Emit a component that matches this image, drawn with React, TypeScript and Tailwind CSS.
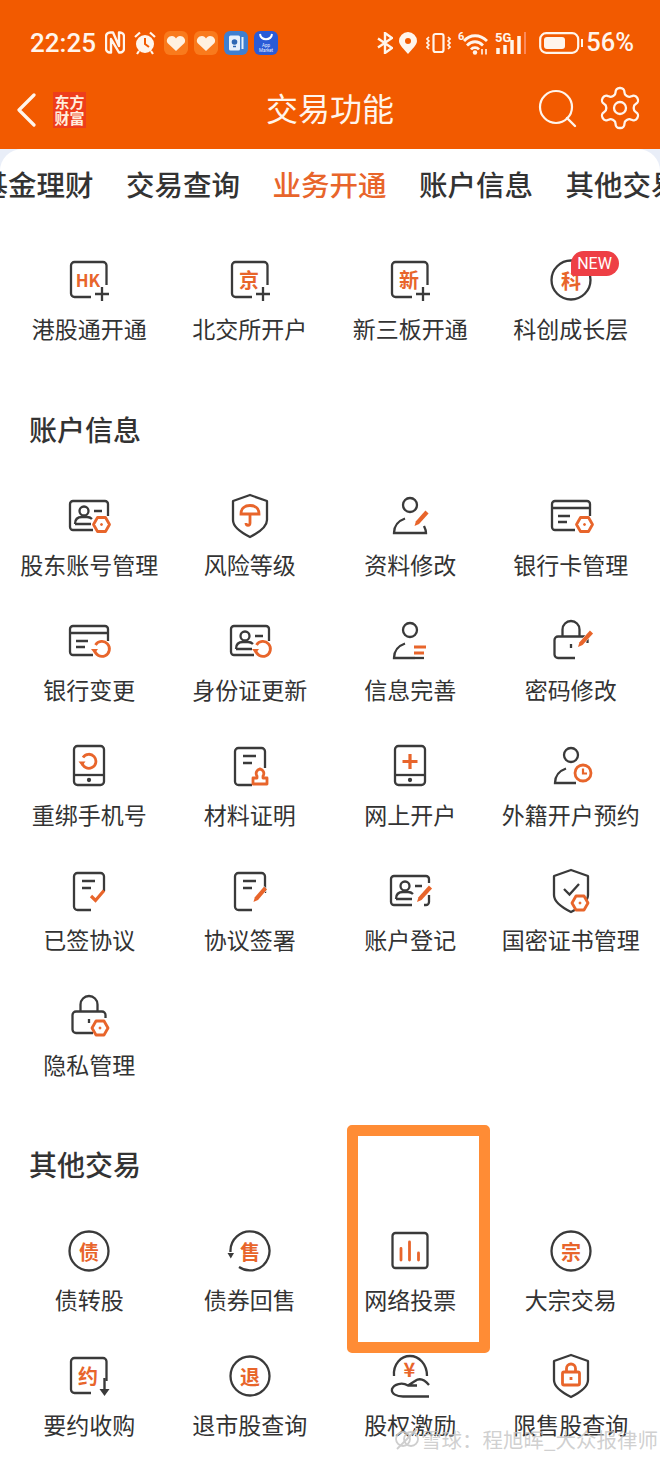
import React from 'react';

const DARK = '#3a3a3a';
const ORANGE = '#e8652b';
const CREAM = '#fff5ec';
const SW = '2.3';

// shared bits for the 48x48 function icons
const Hex = ({ x, y }: { x: number; y: number }) => (
  <g stroke={ORANGE} strokeWidth="2.8" fill="#fff" strokeLinejoin="round">
    <path d={`M${x - 4} ${y - 7}H${x + 4}L${x + 8} ${y}L${x + 4} ${y + 7}H${x - 4}L${x - 8} ${y}Z`} />
    <circle cx={x} cy={y} r="1" fill={ORANGE} strokeWidth="1" />
  </g>
);

const Refresh = ({ x, y, r = 7.5 }: { x: number; y: number; r?: number }) => (
  <g fill="none">
    <circle cx={x} cy={y} r={r + 1.5} fill="#fff" stroke="none" />
    <path d={`M${x - r + 1} ${y - 4}A${r} ${r} 0 1 1 ${x - r} ${y + 1}`} stroke={ORANGE} strokeWidth="2.8" />
    <path d={`M${x - r - 3.5} ${y}H${x - r + 3.5}L${x - r} ${y + 4.5}Z`} fill={ORANGE} />
  </g>
);

// pencil: thick shaft that narrows to a point at (x2, y2)
const Pen = ({ x1, y1, x2, y2 }: { x1: number; y1: number; x2: number; y2: number }) => {
  const len = Math.hypot(x2 - x1, y2 - y1);
  const ux = (x2 - x1) / len;
  const uy = (y2 - y1) / len;
  const nx = -uy * 2.1;
  const ny = ux * 2.1;
  const bx = x2 - ux * 4.5;
  const by = y2 - uy * 4.5;
  const d = `M${x1 + nx} ${y1 + ny}L${bx + nx} ${by + ny}L${x2} ${y2}L${bx - nx} ${by - ny}L${x1 - nx} ${y1 - ny}Z`;
  return <path d={d} fill={ORANGE} stroke="#fff" strokeWidth="1" paintOrder="stroke" />;
};

const Person = ({ short = false }: { short?: boolean }) => (
  <g fill="none" stroke={DARK} strokeWidth={SW}>
    <circle cx="24" cy="13" r="7" />
    <path d={short ? 'M29 41H8C8 34 12 29 19 26.500' : 'M38 34C39 36 40 38 40 41H8C8 34 12 29 19 26.500'} />
  </g>
);

const IdCard = () => (
  <g fill="none" stroke={DARK} strokeWidth={SW}>
    <path d="M28 38H8A3 3 0 0 1 5 35V12A3 3 0 0 1 8 9H40A3 3 0 0 1 43 12V24" />
    <circle cx="19" cy="19" r="4.500" />
    <path d="M10 32C10 27 13 25 17 25H22C24 25 26 26 27 27M10 32H26M29 19H37" />
  </g>
);

const BankCard = () => (
  <g fill="none" stroke={DARK} strokeWidth={SW}>
    <path d="M28 38H8A3 3 0 0 1 5 35V12A3 3 0 0 1 8 9H40A3 3 0 0 1 43 12V24M5 16H43M11 24H23M11 30H20" />
  </g>
);

const Shield = () => (
  <path d="M24 3L41 9V28C41 36 30 42 24 45C18 42 7 36 7 28V9Z" fill="none" stroke={DARK} strokeWidth={SW} strokeLinejoin="round" />
);

const Phone = () => (
  <g fill="none" stroke={DARK} strokeWidth={SW}>
    <rect x="9" y="4" width="30" height="39" rx="3.500" />
    <path d="M9 33H39" />
    <circle cx="24" cy="38" r="1" fill={DARK} />
  </g>
);

const Doc = () => (
  <g fill="none" stroke={DARK} strokeWidth={SW}>
    <path d="M26 43H12.500A3.500 3.500 0 0 1 9 39.500V9.500A3.500 3.500 0 0 1 12.500 6H35.500A3.500 3.500 0 0 1 39 9.500V26M17 14H30M17 21H26" />
  </g>
);

const Padlock = () => (
  <g fill="none" stroke={DARK} strokeWidth={SW}>
    <path d="M28 41H11A3.500 3.500 0 0 1 7.500 37.500V23A3.500 3.500 0 0 1 11 19.500H37A3.500 3.500 0 0 1 40.500 23V26M15.500 19.500V12.500A8.500 8.500 0 0 1 32.500 12.500V19.500M24 27V31" />
  </g>
);

const OpenSquare = () => (
  <path d="M26 41H9.500A3.500 3.500 0 0 1 6 37.500V9.500A3.500 3.500 0 0 1 9.500 6H38A3.500 3.500 0 0 1 41.500 9.500V29" fill="none" stroke={DARK} strokeWidth={SW} />
);

const Glyph = ({ t, x = 24, y = 24, size = 20 }: { t: string; x?: number; y?: number; size?: number }) => (
  <text x={x} y={y} fill={ORANGE} fontSize={size} fontWeight="700" textAnchor="middle" dominantBaseline="central" fontFamily="'Noto Sans CJK SC', sans-serif">
    {t}
  </text>
);

const Plus = () => <path d="M37 31V45M30 38H44" stroke={DARK} strokeWidth={SW} fill="none" />;
const Ring = () => <circle cx="24" cy="24" r="19.500" fill="none" stroke={DARK} strokeWidth={SW} />;

const icons: Record<string, React.ReactNode> = {
  hk: (<><OpenSquare /><Plus /><Glyph t="HK" x={23} y={23} size={17} /></>),
  jing: (<><OpenSquare /><Plus /><Glyph t="京" x={23} y={23} /></>),
  xin: (<><OpenSquare /><Plus /><Glyph t="新" x={23} y={23} /></>),
  ke: (<><Ring /><Glyph t="科" /></>),
  idHex: (<><IdCard /><Hex x={36.500} y={32.500} /></>),
  umbrella: (
    <>
      <Shield />
      <path d="M15 22C15 16 19 13.500 24 13.500C29 13.500 33 16 33 22ZM24 22V31C24 34 20 34 20 31" fill="none" stroke={ORANGE} strokeWidth="2.800" />
    </>
  ),
  personPen: (<><Person /><Pen x1={41} y1={20} x2={28.500} y2={34} /></>),
  cardHex: (<><BankCard /><Hex x={37.500} y={32.500} /></>),
  cardRefresh: (<><BankCard /><Refresh x={37} y={32} /></>),
  idRefresh: (<><IdCard /><Refresh x={37} y={32} /></>),
  personLines: (
    <>
      <Person short />
      <path d="M28 30H40M28 36H38" stroke={ORANGE} strokeWidth="2.800" fill="none" />
      <path d="M38 41H29" stroke={DARK} strokeWidth={SW} fill="none" />
    </>
  ),
  lockPen: (<><Padlock /><Pen x1={44.500} y1={15} x2={31} y2={30} /></>),
  phoneRefresh: (<><Phone /><Refresh x={24} y={19.500} r={7} /></>),
  docStamp: (
    <>
      <Doc />
      <g fill="#fff" stroke={ORANGE} strokeWidth="2.800">
        <path d="M34 27A4.500 4.500 0 0 1 37 34V36H41V42H27V36H31V34A4.500 4.500 0 0 1 34 27Z" strokeLinejoin="round" />
      </g>
    </>
  ),
  phonePlus: (<><Phone /><path d="M24 12V27M16.500 19.500H31.500" stroke={ORANGE} strokeWidth="3.200" fill="none" /></>),
  personClock: (
    <>
      <Person short />
      <circle cx="36" cy="31" r="8" fill="#fff" stroke={ORANGE} strokeWidth="2.800" />
      <path d="M36 26.500V31.500H40" stroke={ORANGE} strokeWidth="2.200" fill="none" />
    </>
  ),
  docCheck: (<><Doc /><rect x="24" y="24" width="17" height="12" fill="#fff" /><path d="M26 29L30.500 33.500L39 23.500" stroke={ORANGE} strokeWidth="3.200" fill="none" /></>),
  docPen: (<><Doc /><Pen x1={39.500} y1={21} x2={27.500} y2={35} /></>),
  idPen: (
    <>
      <g fill="none" stroke={DARK} strokeWidth={SW}>
        <path d="M26 38H8A3 3 0 0 1 5 35V12A3 3 0 0 1 8 9H40A3 3 0 0 1 43 12V16M43 28V35A3 3 0 0 1 40 38H38" />
        <circle cx="19" cy="19" r="4.500" />
        <path d="M10 32C10 27 13 25 17 25H22C24 25 26 26 27 27M10 32H26M29 19H36" />
      </g>
      <Pen x1={44.500} y1={20} x2={31} y2={35} />
    </>
  ),
  shieldHex: (
    <>
      <Shield />
      <path d="M17 22L22.500 27.500L32 17" stroke={DARK} strokeWidth={SW} fill="none" />
      <Hex x={33} y={36} />
    </>
  ),
  lockHex: (<><Padlock /><Hex x={35} y={36} /></>),
  zhai: (<><Ring /><Glyph t="债" /></>),
  shou: (
    <>
      <path d="M13 40A19.500 19.500 0 1 0 4.500 25" fill="none" stroke={DARK} strokeWidth={SW} />
      <path d="M1.500 26H8L4.800 31.500Z" fill={DARK} />
      <Glyph t="售" />
    </>
  ),
  chart: (
    <>
      <rect x="6.500" y="6" width="35" height="35" rx="3" fill="none" stroke={DARK} strokeWidth={SW} />
      <path d="M15 21.500V33M23.500 15V33M32.500 26V33" stroke={ORANGE} strokeWidth="2.800" strokeLinecap="round" fill="none" />
    </>
  ),
  zong: (<><Ring /><Glyph t="宗" /></>),
  yue: (
    <>
      <OpenSquare />
      <path d="M39.500 26V38" stroke={DARK} strokeWidth="2.400" fill="none" />
      <path d="M34.500 37H44.500L39.500 44Z" fill={DARK} />
      <Glyph t="约" x={23} y={23} />
    </>
  ),
  tui: (<><Ring /><Glyph t="退" /></>),
  equity: (
    <>
      <path d="M8 24C7 12 15 4 24 4C33 4 41 12 41 24" fill="none" stroke={DARK} strokeWidth={SW} />
      <Glyph t="¥" x={23.500} y={16} size={20} />
      <path d="M43 33C38 27 33 26 29 29L22 33.500H31M22 33.500C16 30 8 32 6 37C5 42 11 44.500 17 44.500H43" fill="none" stroke={DARK} strokeWidth={SW} strokeLinejoin="round" />
    </>
  ),
  shieldLock: (
    <>
      <Shield />
      <rect x="15.500" y="20" width="17" height="13" rx="1.500" fill="none" stroke={ORANGE} strokeWidth="2.800" />
      <path d="M19.500 20V16.500A4.500 4.500 0 0 1 28.500 16.500V20" fill="none" stroke={ORANGE} strokeWidth="2.800" />
      <path d="M24 25V28" stroke={ORANGE} strokeWidth="2.800" />
    </>
  ),
};

type Item = { icon: string; label: string };

const openItems: Item[] = [
  { icon: 'hk', label: '港股通开通' },
  { icon: 'jing', label: '北交所开户' },
  { icon: 'xin', label: '新三板开通' },
  { icon: 'ke', label: '科创成长层' },
];

const accountItems: Item[] = [
  { icon: 'idHex', label: '股东账号管理' },
  { icon: 'umbrella', label: '风险等级' },
  { icon: 'personPen', label: '资料修改' },
  { icon: 'cardHex', label: '银行卡管理' },
  { icon: 'cardRefresh', label: '银行变更' },
  { icon: 'idRefresh', label: '身份证更新' },
  { icon: 'personLines', label: '信息完善' },
  { icon: 'lockPen', label: '密码修改' },
  { icon: 'phoneRefresh', label: '重绑手机号' },
  { icon: 'docStamp', label: '材料证明' },
  { icon: 'phonePlus', label: '网上开户' },
  { icon: 'personClock', label: '外籍开户预约' },
  { icon: 'docCheck', label: '已签协议' },
  { icon: 'docPen', label: '协议签署' },
  { icon: 'idPen', label: '账户登记' },
  { icon: 'shieldHex', label: '国密证书管理' },
  { icon: 'lockHex', label: '隐私管理' },
];

const otherItems: Item[] = [
  { icon: 'zhai', label: '债转股' },
  { icon: 'shou', label: '债券回售' },
  { icon: 'chart', label: '网络投票' },
  { icon: 'zong', label: '大宗交易' },
  { icon: 'yue', label: '要约收购' },
  { icon: 'tui', label: '退市股查询' },
  { icon: 'equity', label: '股权激励' },
  { icon: 'shieldLock', label: '限售股查询' },
];

const tabs = ['基金理财', '交易查询', '业务开通', '账户信息', '其他交易'];

function FuncItem({ item }: { item: Item }) {
  return (
    <div className="relative flex flex-col items-center">
      <svg width="48" height="48" viewBox="0 0 48 48">
        {icons[item.icon]}
      </svg>
      <span className="mt-[8px] whitespace-nowrap text-[23px] leading-[32px] text-[#333]">{item.label}</span>
      {item.icon === 'ke' && (
        <span className="absolute left-[80px] top-[-5px] flex h-[25px] w-[48px] items-center justify-center rounded-[13px] rounded-bl-[4px] bg-[#ee3f45] font-['Roboto'] text-[16px] text-white">
          NEW
        </span>
      )}
    </div>
  );
}

const Heart = () => (
  <svg className="ml-[6px]" width="24" height="24" viewBox="0 0 24 24">
    <rect width="24" height="24" rx="6" fill="#f97a1c" />
    <path d="M12 20L3.500 12C1.500 8.500 4.500 5 8 5C10 5 11 6 12 7.500C13 6 14 5 16 5C19.500 5 22.500 8.500 20.500 12Z" fill="#fff1e0" />
  </svg>
);

function StatusBar() {
  return (
    <div className="flex h-[85px] items-center pl-[30px] pr-[26px]">
      <span className="font-['Roboto'] text-[26px] font-medium leading-none text-[#fff5ec]">22:25</span>

      <svg className="ml-[9px]" width="20" height="23" viewBox="0 0 20 23">
        <path d="M8 1.500H5A4 4 0 0 0 1 5.500V17.500A4 4 0 0 0 5 21.500H6V8L14 21.500H15A4 4 0 0 0 19 17.500V5.500A4 4 0 0 0 15 1.500H14V15L8 1.500Z" fill="none" stroke={CREAM} strokeWidth="2.400" strokeLinejoin="round" />
      </svg>
      <svg className="ml-[9px]" width="22" height="24" viewBox="0 0 22 24">
        <circle cx="11" cy="13" r="9" fill={CREAM} />
        <path d="M11 7V13L15 16" stroke="#f25a00" strokeWidth="2" fill="none" />
        <path d="M1 6L6 1.500M21 6L16 1.500M5 20L3 23M17 20L19 23" stroke={CREAM} strokeWidth="2.200" />
      </svg>

      <div className="ml-[2px]" />
      <Heart />
      <Heart />
      <svg className="ml-[6px]" width="24" height="24" viewBox="0 0 24 24">
        <rect width="24" height="24" rx="6" fill="#3f7fd0" />
        <rect x="5" y="4.500" width="11" height="15" rx="1.500" fill="#e8f1fb" />
        <circle cx="10.500" cy="11" r="2.800" fill="#2f68b4" />
        <path d="M9 15.500H12" stroke="#2f68b4" strokeWidth="1.500" />
        <path d="M18.500 6V18" stroke="#e8f1fb" strokeWidth="2" />
      </svg>
      <svg className="ml-[6px]" width="24" height="24" viewBox="0 0 24 24">
        <rect width="24" height="24" rx="6" fill="#2a5bd7" />
        <path d="M6 3C7 10 17 10 18 3" stroke="#fff" strokeWidth="2" fill="none" />
        <text x="12" y="15.500" fontSize="4.500" textAnchor="middle" fill="#e6eeff" fontFamily="Roboto">App</text>
        <text x="12" y="20.500" fontSize="4.500" textAnchor="middle" fill="#e6eeff" fontFamily="Roboto">Market</text>
      </svg>

      <div className="flex-1" />

      <svg width="16" height="22" viewBox="0 0 16 22">
        <path d="M1 6.500L15 16L8 21V1L15 6L1 15.500" stroke={CREAM} strokeWidth="2.400" fill="none" />
      </svg>
      <svg className="ml-[6px]" width="18" height="22" viewBox="0 0 18 22">
        <path fillRule="evenodd" d="M9 22C5 17 0 13 0 9A9 9 0 0 1 18 9C18 13 13 17 9 22ZM9 12A3 3 0 1 0 9 6A3 3 0 0 0 9 12Z" fill={CREAM} />
      </svg>
      <svg className="ml-[9px]" width="25" height="22" viewBox="0 0 25 22">
        <rect x="7.500" y="2" width="10" height="18" rx="2" fill="none" stroke={CREAM} strokeWidth="2.200" />
        <path d="M3 5L1 7L3 9L1 11L3 13L1 15L3 17M22 5L24 7L22 9L24 11L22 13L24 15L22 17" stroke={CREAM} strokeWidth="1.600" fill="none" />
      </svg>
      <svg className="ml-[7px]" width="31" height="24" viewBox="0 0 31 24">
        <text x="0" y="9" fontSize="11" fontWeight="700" fill={CREAM} fontFamily="Roboto">6</text>
        <path d="M6 10C12 3 22 3 29 10M9 14.500C14 9.500 20 9.500 25 14.500M13 18.500C15 16 19 16 21 18.500" stroke={CREAM} strokeWidth="2.800" fill="none" />
        <circle cx="17" cy="21.500" r="2.200" fill={CREAM} />
        <path d="M24 23.500V18M28 18V23.500" stroke={CREAM} strokeWidth="1.600" />
      </svg>
      <svg className="ml-[6px]" width="31" height="24" viewBox="0 0 31 24">
        <text x="0" y="11" fontSize="13" fontWeight="700" fill={CREAM} fontFamily="Roboto">5G</text>
        <path d="M3 17V23M10 14V23M17 9V23M24 5V23" stroke={CREAM} strokeWidth="3.500" />
        <path d="M30 1V23" stroke="#fb8a5c" strokeWidth="2" />
      </svg>
      <svg className="ml-[13px]" width="44" height="24" viewBox="0 0 44 24">
        <rect x="1.200" y="2.200" width="38" height="19.600" rx="6" fill="none" stroke={CREAM} strokeWidth="2.200" />
        <rect x="5" y="6" width="21" height="12" rx="3" fill={CREAM} />
        <path d="M43 8V16" stroke={CREAM} strokeWidth="2" />
      </svg>
      <span className="ml-[3px] font-['Roboto'] text-[25.500px] font-medium leading-none text-[#fff5ec]">56%</span>
    </div>
  );
}

function NavBar() {
  return (
    <div className="relative flex h-[64px] justify-center pt-[2px]">
      <div className="absolute left-[16px] top-[7px] flex items-center">
        <svg width="22" height="34" viewBox="0 0 22 34">
          <path d="M18 2L3 17L18 32" stroke={CREAM} strokeWidth="3.200" strokeLinecap="round" strokeLinejoin="round" fill="none" />
        </svg>
        <div className="ml-[15px] flex h-[36px] w-[33px] items-center justify-center bg-[#ee3d1c] text-center text-[15px] font-bold leading-[16px] text-[#ffeedd]">
          东方
          <br />
          财富
        </div>
      </div>
      <span className="text-[32px] leading-[40px] text-[#fff5ec]">交易功能</span>
      <div className="absolute right-[16px] top-[-1px] flex items-center gap-[18px]">
        <svg className="mt-[2px]" width="40" height="40" viewBox="0 0 40 40">
          <circle cx="18" cy="18" r="16" fill="none" stroke={CREAM} strokeWidth="2.200" />
          <path d="M29 29L37 37" stroke={CREAM} strokeWidth="2.400" strokeLinecap="round" />
        </svg>
        <svg width="48" height="48" viewBox="0 0 24 24" fill="none" stroke={CREAM} strokeWidth="1.150" strokeLinecap="round" strokeLinejoin="round">
          <path d="M12.220 2h-.440a2 2 0 0 0-2 2v.180a2 2 0 0 1-1 1.730l-.430.250a2 2 0 0 1-2 0l-.150-.080a2 2 0 0 0-2.730.730l-.220.380a2 2 0 0 0 .730 2.730l.150.100a2 2 0 0 1 1 1.720v.510a2 2 0 0 1-1 1.740l-.150.090a2 2 0 0 0-.730 2.730l.220.380a2 2 0 0 0 2.730.730l.150-.080a2 2 0 0 1 2 0l.430.250a2 2 0 0 1 1 1.730V20a2 2 0 0 0 2 2h.440a2 2 0 0 0 2-2v-.180a2 2 0 0 1 1-1.730l.430-.250a2 2 0 0 1 2 0l.150.080a2 2 0 0 0 2.730-.730l.220-.390a2 2 0 0 0-.730-2.730l-.150-.080a2 2 0 0 1-1-1.740v-.500a2 2 0 0 1 1-1.740l.150-.090a2 2 0 0 0 .730-2.730l-.220-.380a2 2 0 0 0-2.730-.730l-.150.080a2 2 0 0 1-2 0l-.430-.250a2 2 0 0 1-1-1.730V4a2 2 0 0 0-2-2z" />
          <circle cx="12" cy="12" r="3" />
        </svg>
      </div>
    </div>
  );
}

export default function App() {
  return (
    <div
      className="relative h-[1459px] w-[660px] overflow-hidden bg-[#f25a00]"
      style={{ fontFamily: "'Noto Sans CJK SC', 'Noto Sans', sans-serif" }}
    >
      <StatusBar />
      <NavBar />

      <main className="h-[1310px] bg-[#e9eef8]">
        <div className="h-full rounded-t-[22px] bg-white">
          {/* tabs */}
          <div className="flex gap-[32.500px] overflow-hidden pt-[15px]">
            {tabs.map((t, i) => (
              <div
                key={t}
                className={`relative shrink-0 text-[28.500px] font-medium leading-[40px] ${i === 0 ? 'ml-[-20.500px]' : ''} ${
                  t === '业务开通' ? 'text-[#e8652b]' : 'text-[#333]'
                }`}
              >
                {t}
                {t === '业务开通' && (
                  <div className="absolute left-[39px] top-[47px] h-[6px] w-[36px] rounded-full bg-[#e0561c]" />
                )}
              </div>
            ))}
          </div>

          <div className="mt-[52px] grid grid-cols-4 px-[9px]">
            {openItems.map((item) => (
              <FuncItem key={item.label} item={item} />
            ))}
          </div>

          <h2 className="ml-[29px] mt-[65px] text-[28px] font-medium leading-[40px] text-[#333]">账户信息</h2>
          <div className="mt-[43px] grid grid-cols-4 gap-y-[37px] px-[9px]">
            {accountItems.map((item) => (
              <FuncItem key={item.label} item={item} />
            ))}
          </div>

          <h2 className="ml-[29px] mt-[64px] text-[28px] font-medium leading-[40px] text-[#333]">其他交易</h2>
          <div className="mt-[43px] grid grid-cols-4 gap-y-[37px] px-[9px]">
            {otherItems.map((item) => (
              <FuncItem key={item.label} item={item} />
            ))}
          </div>
        </div>
      </main>

      {/* highlight box drawn over the screenshot */}
      <div className="absolute left-[347px] top-[1125px] h-[228px] w-[143px] rounded-[5px] border-[11px] border-[#ff8c35]" />

      {/* snowball watermark */}
      <div className="absolute left-[394px] top-[1425px] flex h-[28px] items-center">
        <svg width="26" height="26" viewBox="0 0 26 26" fill="none" stroke="#c9c9c9" strokeWidth="1.800" opacity="0.900">
          <circle cx="9" cy="13" r="7" />
          <circle cx="17" cy="13" r="7" />
          <path d="M3 23L23 3" />
        </svg>
        <span className="ml-[1px] whitespace-nowrap text-[20.500px] leading-[28px] text-[#c4c4c4]/80">雪球：程旭晖_大众报律师</span>
      </div>
    </div>
  );
}
